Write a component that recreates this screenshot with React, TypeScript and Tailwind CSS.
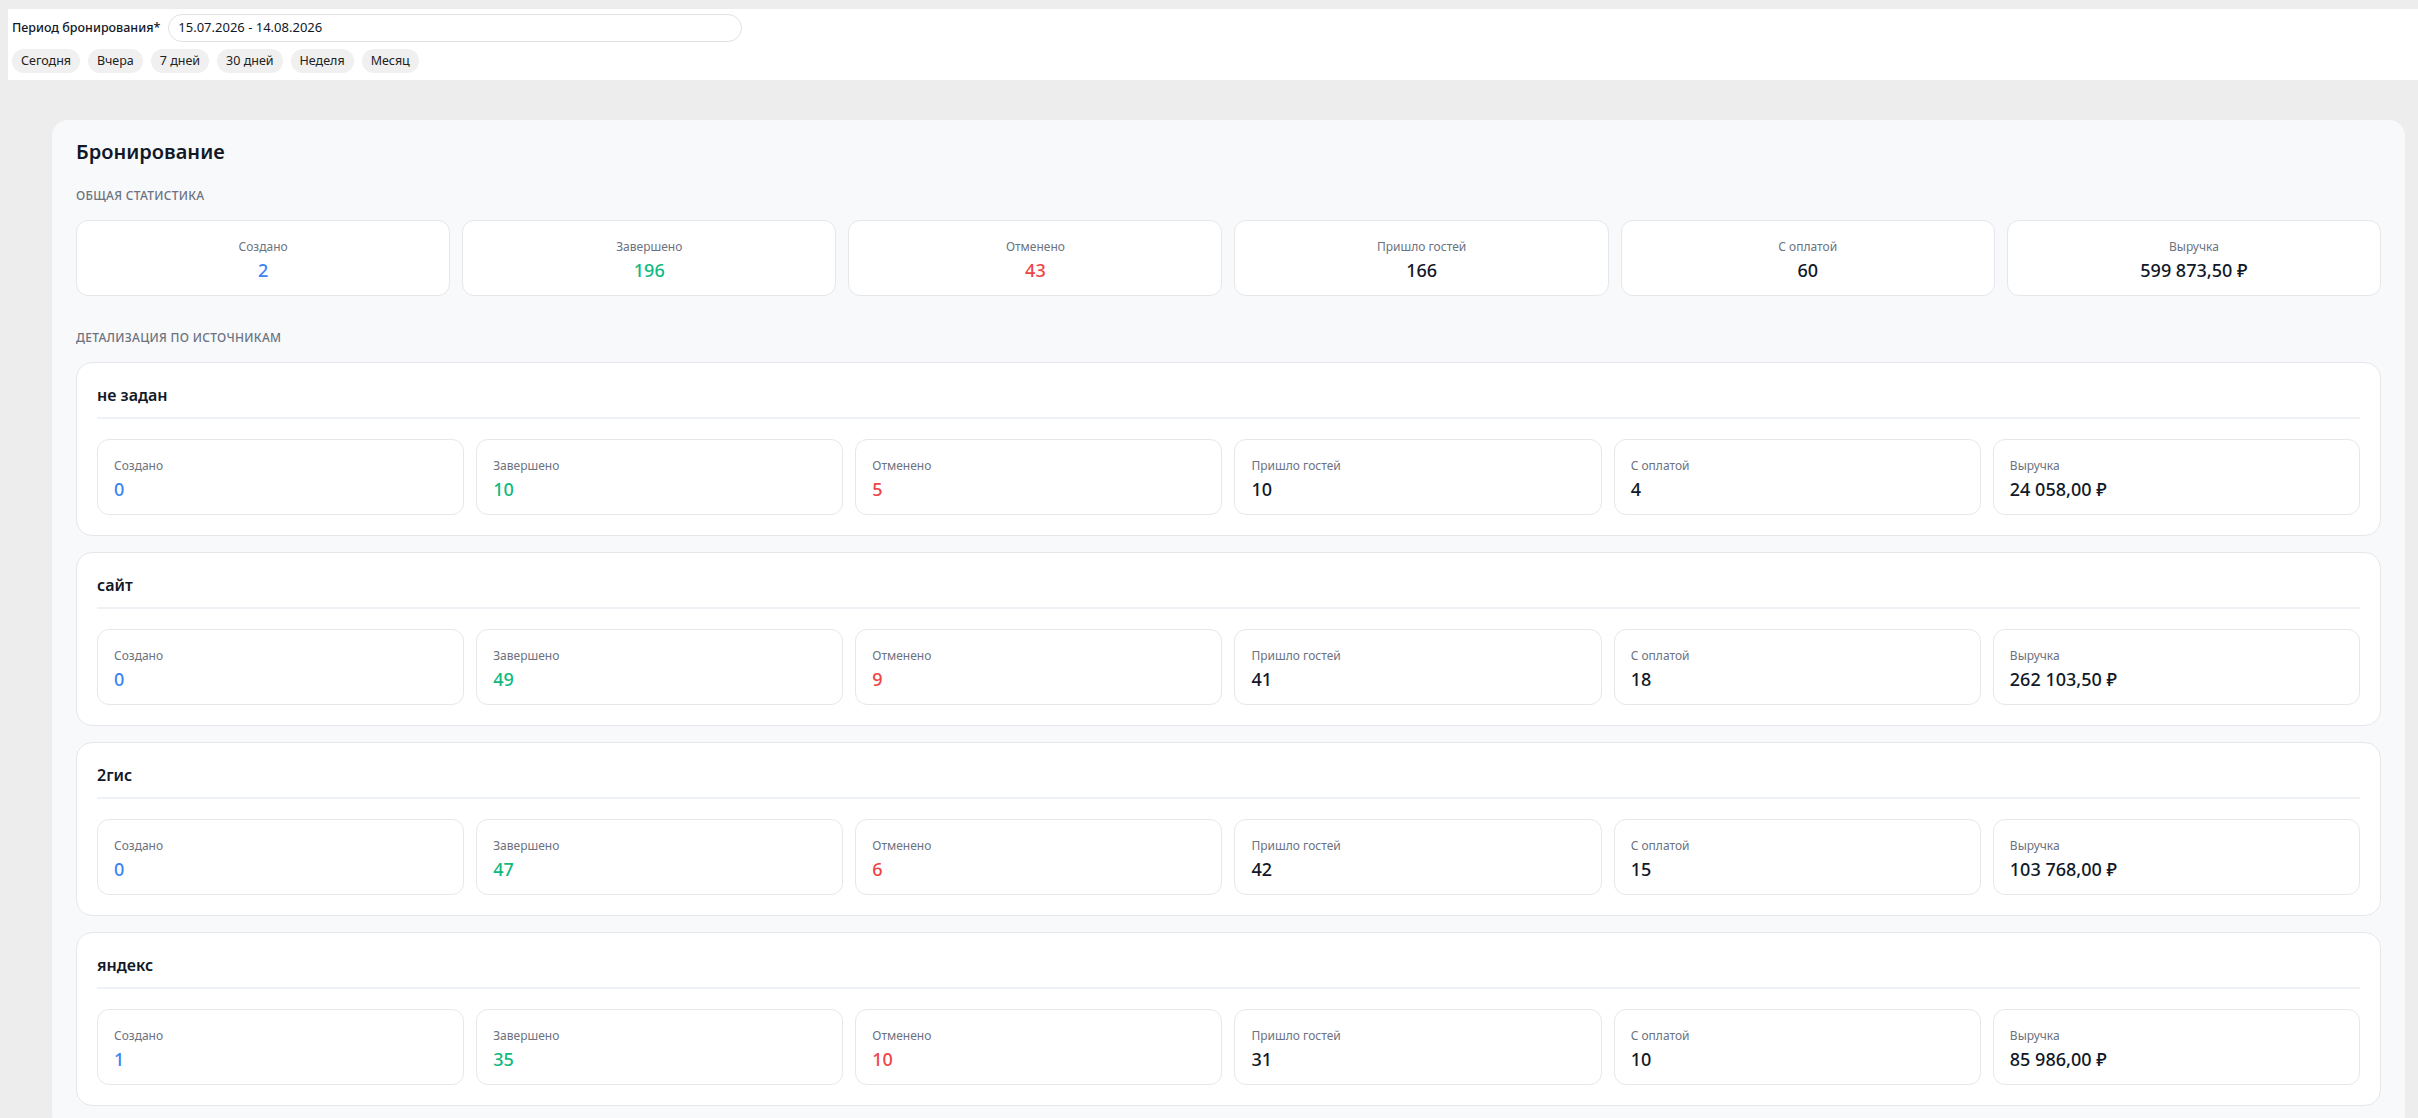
import React from 'react';

type Tone = 'blue' | 'green' | 'red' | 'dark';

interface Stat {
  label: string;
  value: string;
  tone: Tone;
}

const toneClass: Record<Tone, string> = {
  blue: 'text-[#3b82f6]',
  green: 'text-[#10b981]',
  red: 'text-[#ef4444]',
  dark: 'text-[#111827]',
};

function makeStats(v: [string, string, string, string, string, string]): Stat[] {
  return [
    { label: 'Создано', value: v[0], tone: 'blue' },
    { label: 'Завершено', value: v[1], tone: 'green' },
    { label: 'Отменено', value: v[2], tone: 'red' },
    { label: 'Пришло гостей', value: v[3], tone: 'dark' },
    { label: 'С оплатой', value: v[4], tone: 'dark' },
    { label: 'Выручка', value: v[5], tone: 'dark' },
  ];
}

const totals = makeStats(['2', '196', '43', '166', '60', '599 873,50 ₽']);

const sources: { name: string; stats: Stat[] }[] = [
  { name: 'не задан', stats: makeStats(['0', '10', '5', '10', '4', '24 058,00 ₽']) },
  { name: 'сайт', stats: makeStats(['0', '49', '9', '41', '18', '262 103,50 ₽']) },
  { name: '2гис', stats: makeStats(['0', '47', '6', '42', '15', '103 768,00 ₽']) },
  { name: 'яндекс', stats: makeStats(['1', '35', '10', '31', '10', '85 986,00 ₽']) },
];

const presets = ['Сегодня', 'Вчера', '7 дней', '30 дней', 'Неделя', 'Месяц'];

function StatCard({ stat, centered }: { stat: Stat; centered?: boolean }) {
  return (
    <div
      className={
        'rounded-xl border border-[#e5e7eb] bg-white px-4 pt-[18px] pb-[13px] ' +
        (centered ? 'text-center' : 'text-left')
      }
    >
      {/* подпись */}
      <div className="text-xs leading-4 text-[#6b7280]">{stat.label}</div>
      {/* значение */}
      <div className={'mt-[3px] text-lg leading-6 font-medium ' + toneClass[stat.tone]}>
        {stat.value}
      </div>
    </div>
  );
}

function SourceCard({ name, stats }: { name: string; stats: Stat[] }) {
  return (
    <div className="rounded-2xl border border-[#e5e7eb] bg-white p-5">
      <div className="border-b-2 border-[#eef1f5] pb-2.5">
        <h3 className="text-base leading-6 font-semibold text-[#111827]">{name}</h3>
      </div>
      <div className="mt-5 grid grid-cols-6 gap-3">
        {stats.map((s) => (
          <StatCard key={s.label} stat={s} />
        ))}
      </div>
    </div>
  );
}

export default function App() {
  return (
    <div
      className="min-h-screen bg-[#ededed] pt-[9px] text-[#111827]"
      style={{ fontFamily: '"Noto Sans", "Open Sans", Arial, sans-serif' }}
    >
      {/* фильтр периода */}
      <div className="ml-2 bg-white px-1 pt-[5px] pb-[7px]">
        <div className="flex h-7 items-center gap-[8px]">
          <label className="text-[12.5px] font-medium text-[#111827]">Период бронирования*</label>
          <div className="flex h-7 w-[574px] items-center rounded-full border border-[#e2e2e2] bg-white pl-[9px] text-[13px] text-[#111827]">
            15.07.2026 - 14.08.2026
          </div>
        </div>
        <div className="mt-[7px] flex gap-2">
          {presets.map((p) => (
            <button
              key={p}
              className="h-6 rounded-full bg-[#f0f0f0] px-[9px] text-[12.5px] text-[#222]"
            >
              {p}
            </button>
          ))}
        </div>
      </div>

      {/* основная карточка */}
      <div className="mt-10 ml-[52px] mr-[13px] rounded-2xl bg-[#f8f9fb] px-6 pt-[18px] pb-6">
        <h1 className="text-xl leading-7 font-semibold text-[#111827]">Бронирование</h1>

        <div className="mt-[22px] text-xs leading-4 font-medium uppercase tracking-wide text-[#6b7280]">
          Общая статистика
        </div>
        <div className="mt-4 grid grid-cols-6 gap-3">
          {totals.map((s) => (
            <StatCard key={s.label} stat={s} centered />
          ))}
        </div>

        <div className="mt-[34px] text-xs leading-4 font-medium uppercase tracking-wide text-[#6b7280]">
          Детализация по источникам
        </div>
        <div className="mt-4 flex flex-col gap-4">
          {sources.map((src) => (
            <SourceCard key={src.name} name={src.name} stats={src.stats} />
          ))}
        </div>
      </div>
    </div>
  );
}
